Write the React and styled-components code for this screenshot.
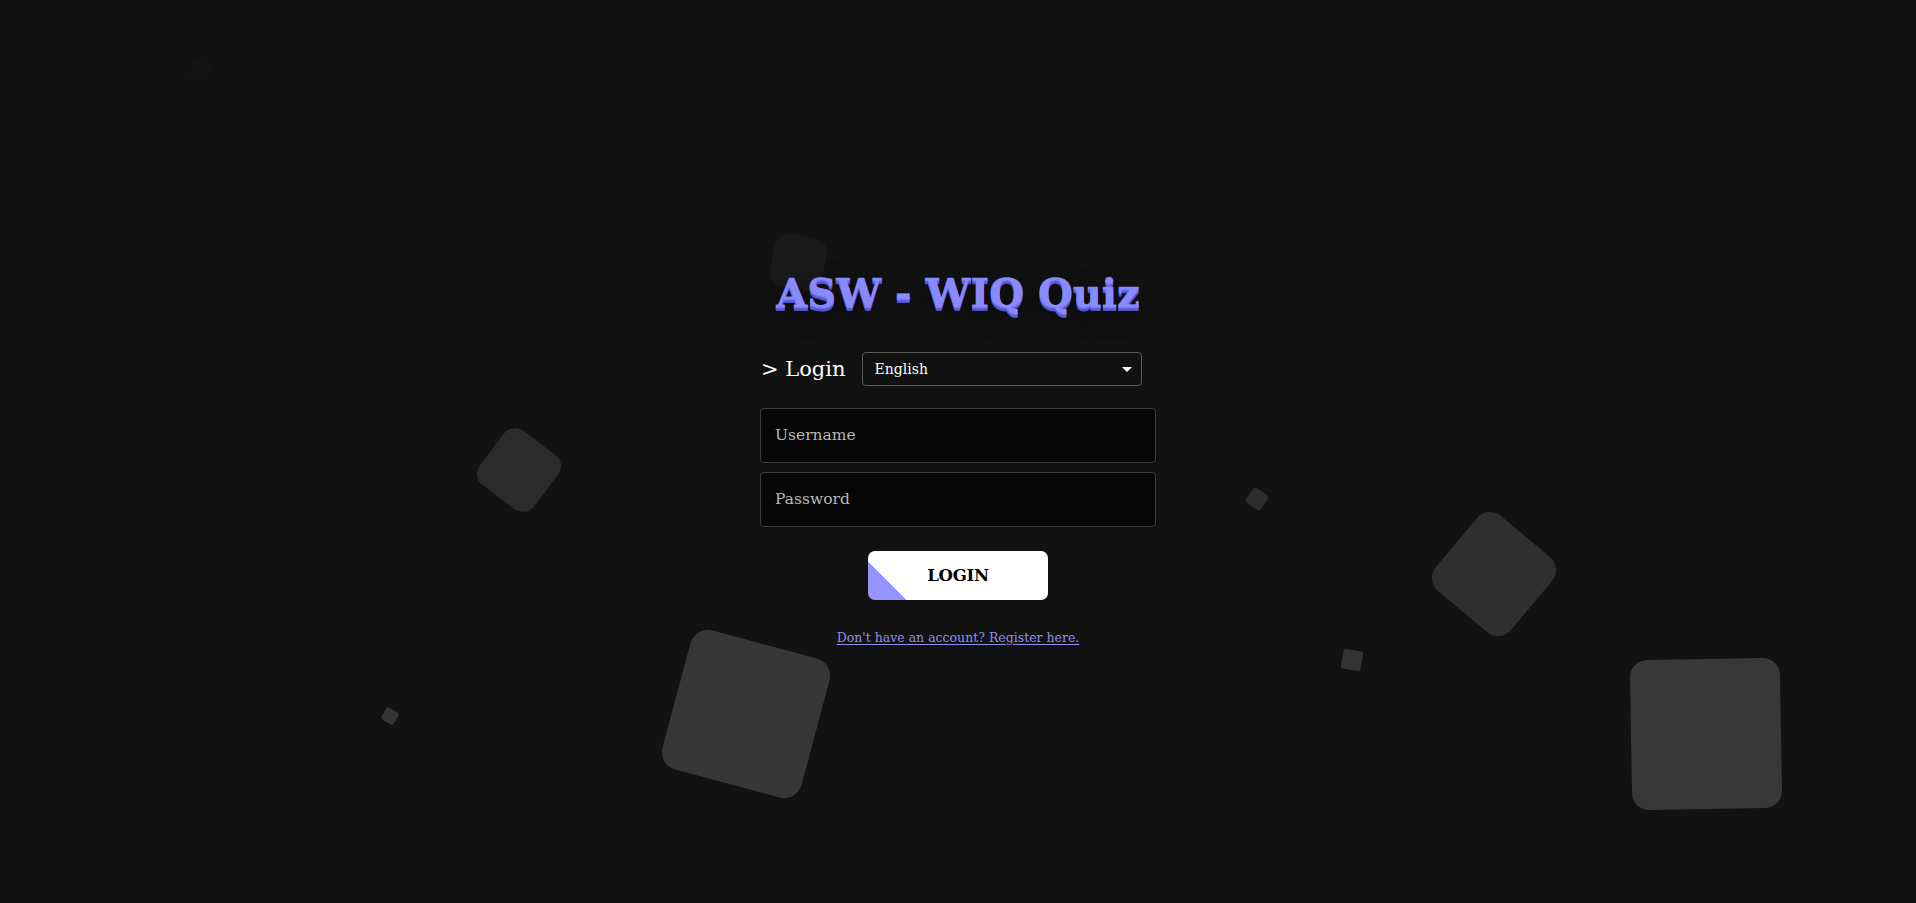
import React from "react";
import styled, { createGlobalStyle } from "styled-components";

const GlobalStyle = createGlobalStyle`
  html, body {
    margin: 0;
    padding: 0;
    background: #121212;
  }
  * {
    box-sizing: border-box;
  }
`;

const Page = styled.main`
  position: relative;
  width: 100vw;
  height: 100vh;
  overflow: hidden;
  background: #121212;
  display: flex;
  align-items: center;
  justify-content: center;
  padding-top: 6px;
  font-family: "DejaVu Serif", "Liberation Serif", serif;
`;

const Shapes = styled.div`
  position: absolute;
  inset: 0;
  pointer-events: none;
`;

const Shape = styled.span`
  position: absolute;
  left: ${(p) => p.$x - p.$size / 2}px;
  top: ${(p) => p.$y - p.$size / 2}px;
  width: ${(p) => p.$size}px;
  height: ${(p) => p.$size}px;
  border-radius: ${(p) => p.$radius}px;
  background: ${(p) => p.$color};
  transform: rotate(${(p) => p.$rotate}deg);
`;

const Card = styled.section`
  position: relative;
  width: 396px;
  display: flex;
  flex-direction: column;
  align-items: stretch;
`;

const Title = styled.h1`
  margin: 0 0 30px;
  text-align: center;
  font-size: 40px;
  line-height: 58px;
  font-weight: 700;
  color: #8a8aff;
  white-space: nowrap;
  -webkit-text-stroke: 0.4px #8a8aff;
  text-shadow: 0 1px 0 #6f6fe6, 0 2px 0 #6464da, 0 3px 0 #5a5ad0,
    0 4px 0 #5050c4, 0 8px 22px rgba(0, 0, 0, 0.75);
`;

const LoginRow = styled.div`
  display: flex;
  align-items: center;
  gap: 16px;
  padding-left: 1px;
  margin-bottom: 22px;
`;

const Heading = styled.h2`
  margin: 0;
  font-size: 21px;
  font-weight: 400;
  color: #ffffff;
  white-space: nowrap;
`;

const SelectWrap = styled.div`
  position: relative;
  width: 280px;
  height: 34px;
`;

const Select = styled.select`
  appearance: none;
  width: 100%;
  height: 100%;
  padding: 0 32px 0 12px;
  background: transparent;
  color: #ffffff;
  font-family: inherit;
  font-size: 14px;
  border: 1px solid #5a5a5a;
  border-radius: 4px;
  outline: none;

  option {
    background: #1c1c1c;
  }
`;

const Caret = styled.svg`
  position: absolute;
  right: 10px;
  top: 50%;
  width: 10px;
  height: 5px;
  margin-top: -2px;
  pointer-events: none;
`;

const Fields = styled.div`
  display: flex;
  flex-direction: column;
  gap: 9px;
  margin-bottom: 24px;
`;

const Input = styled.input`
  width: 100%;
  height: 55px;
  padding: 0 14px;
  background: #060606;
  border: 1px solid #3c3c3c;
  border-radius: 4px;
  color: #ffffff;
  font-family: inherit;
  font-size: 15.5px;
  outline: none;

  &::placeholder {
    color: #b9b9b9;
  }
`;

const Button = styled.button`
  align-self: center;
  width: 180px;
  height: 49px;
  border: none;
  border-radius: 7px;
  background: linear-gradient(45deg, #9595ff 0, #9595ff 27px, #ffffff 27px);
  color: #000000;
  font-family: inherit;
  font-size: 16.5px;
  font-weight: 700;
  letter-spacing: -0.3px;
  cursor: pointer;
  margin-bottom: 30px;
`;

const RegisterLink = styled.a`
  align-self: center;
  color: #8f8ff0;
  font-size: 12.5px;
  line-height: 16px;
  text-decoration: underline;
  text-underline-offset: 2px;
  cursor: pointer;
`;

const shapes = [
  { x: 200, y: 71, size: 20, rotate: 10, radius: 5, color: "#141414" },
  { x: 798, y: 262, size: 53, rotate: 10, radius: 14, color: "#1a1a1a" },
  { x: 519, y: 470, size: 68, rotate: 37, radius: 14, color: "#2b2b2b" },
  { x: 746, y: 714, size: 144, rotate: 15, radius: 18, color: "#373737" },
  { x: 1494, y: 574, size: 98, rotate: 40, radius: 17, color: "#2f2f2f" },
  { x: 1706, y: 734, size: 150, rotate: -1, radius: 17, color: "#383838" },
  { x: 1257, y: 499, size: 18, rotate: 35, radius: 4, color: "#2e2e2e" },
  { x: 1352, y: 660, size: 20, rotate: 10, radius: 3, color: "#333333" },
  { x: 390, y: 716, size: 14, rotate: 30, radius: 2, color: "#353535" },
];

const App = () => {
  return (
    <>
      <GlobalStyle />
      <Page>
        <Shapes>
          {shapes.map((s, i) => (
            <Shape
              key={i}
              $x={s.x}
              $y={s.y}
              $size={s.size}
              $rotate={s.rotate}
              $radius={s.radius}
              $color={s.color}
            />
          ))}
        </Shapes>
        <Card>
          <Title>ASW - WIQ Quiz</Title>
          <LoginRow>
            <Heading>&gt; Login</Heading>
            <SelectWrap>
              <Select defaultValue="en">
                <option value="en">English</option>
                <option value="es">Español</option>
              </Select>
              <Caret viewBox="0 0 10 5">
                <path d="M0 0 L5 5 L10 0 Z" fill="#ffffff" />
              </Caret>
            </SelectWrap>
          </LoginRow>
          <Fields>
            <Input type="text" placeholder="Username" />
            <Input type="password" placeholder="Password" />
          </Fields>
          <Button>LOGIN</Button>
          <RegisterLink>Don't have an account? Register here.</RegisterLink>
        </Card>
      </Page>
    </>
  );
};

export default App;
